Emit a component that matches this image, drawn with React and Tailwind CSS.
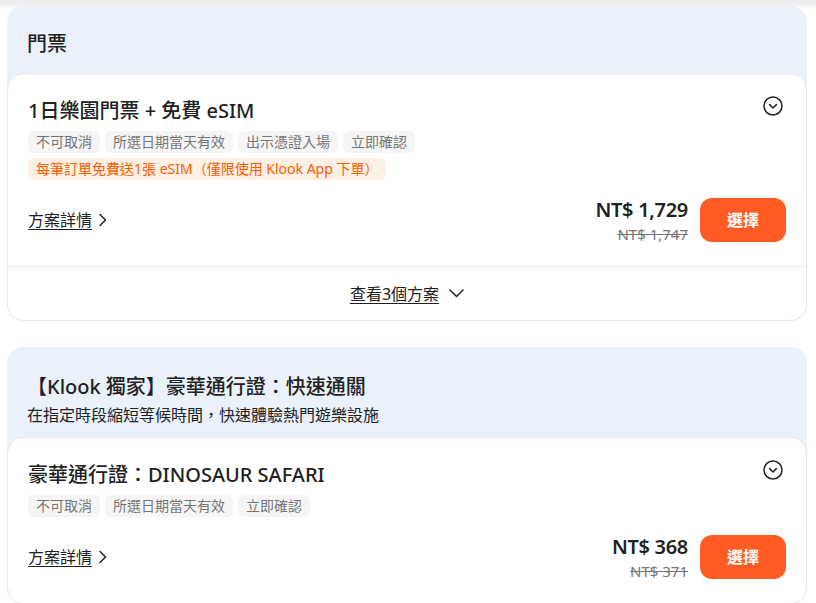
import React from 'react';

const tagsA = ['不可取消', '所選日期當天有效', '出示憑證入場', '立即確認'];
const tagsB = ['不可取消', '所選日期當天有效', '立即確認'];

const CircleDown = () => (
  <svg width="20" height="20" viewBox="0 0 20 20" fill="none" stroke="#212121" strokeWidth="1.5" strokeLinecap="round" strokeLinejoin="round">
    <circle cx="10" cy="10" r="9" />
    <path d="M6.6 8.6 L10 12 L13.4 8.6" />
  </svg>
);

const ChevronRight = () => (
  <svg width="9" height="14" viewBox="0 0 9 14" fill="none" stroke="#212121" strokeWidth="1.5" strokeLinecap="round" strokeLinejoin="round">
    <path d="M2 1.5 L7.5 7 L2 12.5" />
  </svg>
);

const ChevronDown = () => (
  <svg width="15" height="9" viewBox="0 0 15 9" fill="none" stroke="#212121" strokeWidth="1.5" strokeLinecap="round" strokeLinejoin="round">
    <path d="M1 1 L7.5 7.5 L14 1" />
  </svg>
);

const PackageCard = ({ title, tags, promo, price, original, more }) => (
  <div className="bg-white border border-[#e6e6e6] rounded-2xl">
    <div className="px-5 pt-[23px] pb-[22px]">
      <div className="flex justify-between items-start">
        <h3 className="text-[20px] leading-[28px] font-medium text-[#212121]">{title}</h3>
        <div className="mt-[-1px] mr-[3px]">
          <CircleDown />
        </div>
      </div>
      <div className="flex flex-wrap gap-[5px] mt-[6px]">
        {tags.map((t) => (
          <span key={t} className="px-2 h-[22px] leading-[22px] rounded-md bg-[#f5f5f5] text-[14px] text-[#757575]">
            {t}
          </span>
        ))}
      </div>
      {promo && (
        <div className="flex mt-[5px]">
          <span className="px-2 h-[22px] leading-[22px] rounded-md bg-[#fff0e6] text-[14px] text-[#ff5b00]">
            {promo}
          </span>
        </div>
      )}
      <div className="flex items-center justify-between mt-[16px]">
        <a className="flex items-center gap-[6px] text-[16px] text-[#212121]">
          <span className="underline underline-offset-[3px]">方案詳情</span>
          <ChevronRight />
        </a>
        <div className="flex items-center gap-3">
          <div className="text-right">
            <p className="text-[20px] leading-[28px] font-semibold text-[#212121] tracking-[-0.3px]">{price}</p>
            <p className="text-[15px] leading-[20px] text-[#757575] line-through">{original}</p>
          </div>
          <button className="w-[86px] h-[44px] rounded-xl bg-[#ff5b22] text-white text-[16px] font-bold">
            選擇
          </button>
        </div>
      </div>
    </div>
    {more && (
      <div className="border-t border-[#e6e6e6] h-[54px] flex items-center justify-center gap-[10px]">
        <span className="text-[16px] text-[#212121] underline underline-offset-[3px]">{more}</span>
        <ChevronDown />
      </div>
    )}
  </div>
);

export default function App() {
  return (
    <div className="relative bg-white min-h-[603px] overflow-hidden" style={{ fontFamily: '"Noto Sans", "Noto Sans CJK TC", sans-serif' }}>
      <div className="absolute top-0 left-0 right-0 h-[9px] bg-gradient-to-b from-[#ececec] via-[#efefef] to-transparent z-10" />
      <div className="ml-[7px] w-[800px] pt-[6px]">
        <section className="bg-[#eaf1fa] rounded-2xl">
          <h2 className="px-5 pt-[24px] pb-[15px] text-[20px] leading-[28px] font-medium text-[#212121]">門票</h2>
          <PackageCard
            title="1日樂園門票 + 免費 eSIM"
            tags={tagsA}
            promo="每筆訂單免費送1張 eSIM（僅限使用 Klook App 下單）"
            price="NT$ 1,729"
            original="NT$ 1,747"
            more="查看3個方案"
          />
        </section>

        <section className="bg-[#eaf1fa] rounded-2xl mt-[26px]">
          <div className="px-5 pt-[26px] pb-[10px]">
            <h2 className="text-[20px] leading-[28px] font-medium text-[#212121]">【Klook 獨家】豪華通行證：快速通關</h2>
            <p className="mt-[2px] text-[16px] leading-[24px] text-[#212121]">在指定時段縮短等候時間，快速體驗熱門遊樂設施</p>
          </div>
          <PackageCard
            title="豪華通行證：DINOSAUR SAFARI"
            tags={tagsB}
            price="NT$ 368"
            original="NT$ 371"
          />
        </section>
      </div>
    </div>
  );
}
